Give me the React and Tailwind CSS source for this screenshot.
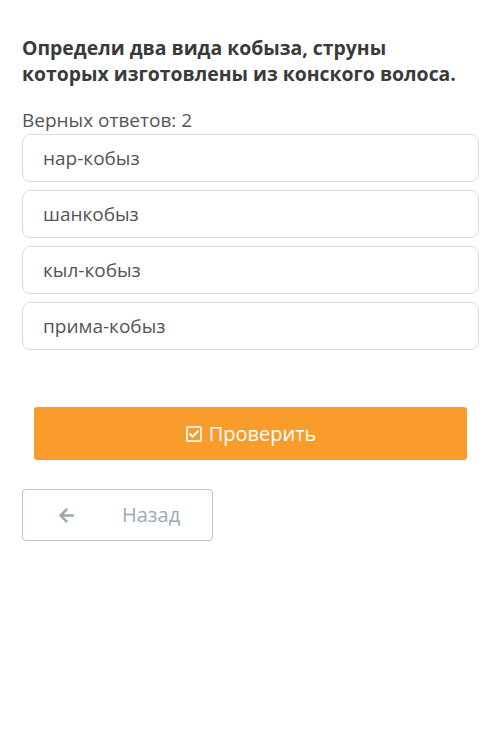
import { FaRegCheckSquare, FaArrowLeft } from 'react-icons/fa'

const options = ['нар-кобыз', 'шанкобыз', 'кыл-кобыз', 'прима-кобыз']

export default function App() {
  return (
    <div className="min-h-[750px] w-[500px] bg-white px-[22px] pt-[35px] font-['Open_Sans',sans-serif]">
      <h1 className="max-w-[445px] text-[19.4px] font-bold leading-[26px] text-[#3a3a3a]">
        Определи два вида кобыза, струны которых изготовлены из конского волоса.
      </h1>
      <p className="mt-[20px] text-[19px] leading-[26px] text-[#555]">Верных ответов: 2</p>

      <div className="mt-[1px] mr-[-1px] flex flex-col gap-[8px]">
        {options.map((o) => (
          <div
            key={o}
            className="flex h-[48px] items-center rounded-[8px] border border-[#dcdcdc] px-[20px] text-[19px] text-[#555]"
          >
            {o}
          </div>
        ))}
      </div>

      <button className="mx-[12px] mt-[57px] flex h-[53px] w-[433px] items-center justify-center gap-[6px] rounded-[3px] bg-[#f99c2b] text-[20px] text-white">
        <FaRegCheckSquare className="text-[18px]" />
        Проверить
      </button>

      <button className="mt-[29px] flex h-[52px] w-[191px] items-center rounded-[4px] border border-[#b7c3cb] text-[20px] text-[#9aa9b3]">
        <FaArrowLeft className="ml-[35px] text-[17px]" />
        <span className="ml-[47px]">Назад</span>
      </button>
    </div>
  )
}
